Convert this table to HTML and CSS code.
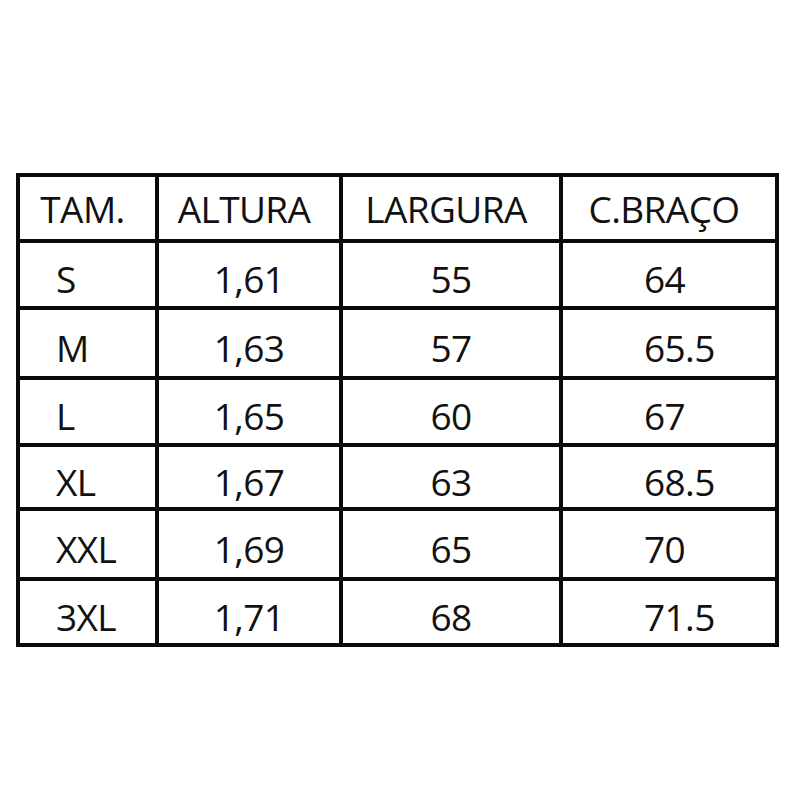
FILE: index.html
```html
<!DOCTYPE html>
<html lang="pt">
<head>
<meta charset="utf-8">
<title>Tabela de medidas</title>
<link rel="stylesheet" href="styles.css">
</head>
<body>
<div class="page">
  <div class="size-table">
    <div class="cell head">TAM.</div>
    <div class="cell head">ALTURA</div>
    <div class="cell head">LARGURA</div>
    <div class="cell head">C.BRAÇO</div>

    <div class="cell size">S</div>
    <div class="cell num">1,61</div>
    <div class="cell num">55</div>
    <div class="cell arm">64</div>

    <div class="cell size">M</div>
    <div class="cell num">1,63</div>
    <div class="cell num">57</div>
    <div class="cell arm">65.5</div>

    <div class="cell size">L</div>
    <div class="cell num">1,65</div>
    <div class="cell num">60</div>
    <div class="cell arm">67</div>

    <div class="cell size">XL</div>
    <div class="cell num">1,67</div>
    <div class="cell num">63</div>
    <div class="cell arm">68.5</div>

    <div class="cell size">XXL</div>
    <div class="cell num">1,69</div>
    <div class="cell num">65</div>
    <div class="cell arm">70</div>

    <div class="cell size">3XL</div>
    <div class="cell num">1,71</div>
    <div class="cell num">68</div>
    <div class="cell arm">71.5</div>
  </div>
</div>
</body>
</html>
```

FILE: styles.css
```css
html, body {
  margin: 0;
  padding: 0;
  background: #ffffff;
}

.page {
  width: 800px;
  height: 800px;
  box-sizing: border-box;
  padding: 173px 0 0 16px;
}

.size-table {
  display: grid;
  grid-template-columns: 135px 180px 216px 212px;
  grid-template-rows: 62px 63px 66px 63px 60px 66px 62px;
  gap: 4px;
  padding: 4px;
  background: #0a0a0a;
  width: max-content;
  font-family: "Open Sans", "Noto Sans", sans-serif;
  font-size: 37px;
  font-weight: 400;
  letter-spacing: -0.6px;
  color: #111111;
  line-height: 1;
}

.cell {
  background: #ffffff;
  display: flex;
  align-items: center;
  white-space: nowrap;
}

.head {
  justify-content: center;
  padding-right: 10px;
}

.size {
  justify-content: flex-start;
  padding: 8px 0 0 36px;
}

.num {
  justify-content: center;
  padding-top: 8px;
}

.arm {
  justify-content: flex-start;
  padding: 8px 0 0 81px;
}
```
